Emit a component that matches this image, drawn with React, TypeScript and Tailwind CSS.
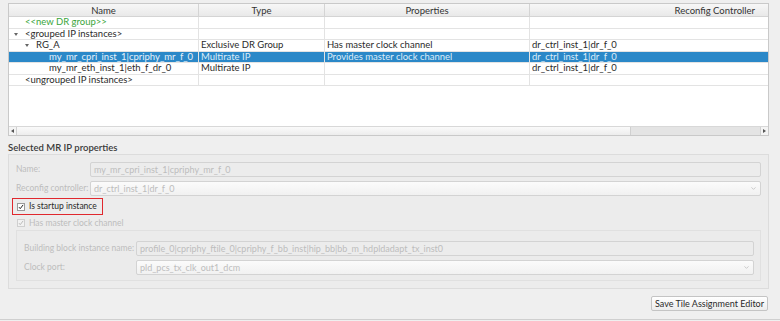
import { ChevronDown } from "lucide-react";

const font = { fontFamily: 'Lato, "Open Sans", sans-serif' };

interface Row {
  name: string;
  indent: number;
  arrow?: boolean;
  type?: string;
  props?: string;
  ctrl?: string;
  green?: boolean;
  selected?: boolean;
  h: string;
}

const rows: Row[] = [
  { name: "<<new DR group>>", indent: 16, green: true, h: "h-[12px]" },
  { name: "<grouped IP instances>", indent: 16, arrow: true, h: "h-[11px]" },
  { name: "RG_A", indent: 27, arrow: true, type: "Exclusive DR Group", props: "Has master clock channel", ctrl: "dr_ctrl_inst_1|dr_f_0", h: "h-[12px]" },
  { name: "my_mr_cpri_inst_1|cpriphy_mr_f_0", indent: 40, type: "Multirate IP", props: "Provides master clock channel", ctrl: "dr_ctrl_inst_1|dr_f_0", selected: true, h: "h-[11px]" },
  { name: "my_mr_eth_inst_1|eth_f_dr_0", indent: 40, type: "Multirate IP", ctrl: "dr_ctrl_inst_1|dr_f_0", h: "h-[12px]" },
  { name: "<ungrouped IP instances>", indent: 16, h: "h-[11px]" },
];

const Check = ({ disabled }: { disabled?: boolean }) => (
  <span
    className={`inline-flex h-[8px] w-[8px] shrink-0 items-center justify-center border ${
      disabled ? "border-[#cfcfcf] bg-[#f2f2f2]" : "border-[#9a9a9a] bg-white"
    }`}
  >
    <svg viewBox="0 0 8 8" className="h-[8px] w-[8px]">
      <path d="M1.3 4.2 L3 6.2 L6.8 1.2" fill="none" stroke={disabled ? "#b8b8b8" : "#222"} strokeWidth="1.3" />
    </svg>
  </span>
);

const Field = ({ value, combo, w }: { value: string; combo?: boolean; w: string }) => (
  <div
    className={`flex h-[15px] ${w} items-center justify-between whitespace-nowrap rounded-[2px] border border-[#d3d3d3] px-[3px] text-[9px] text-[#bdbdbd] ${
      combo ? "bg-gradient-to-b from-[#fbfbfb] to-[#f1f1f1]" : "bg-[#ececec]"
    }`}
  >
    <span>{value}</span>
    {combo && <ChevronDown className="h-[7px] w-[7px] text-[#c4c4c4]" strokeWidth={3} />}
  </div>
);

export default function App() {
  return (
    <div style={font} className="flex h-[321px] w-[780px] flex-col overflow-hidden bg-[#efefef] text-[#333]">
      <div className="flex items-start pt-[3px]">
        <div className="ml-[8px] flex h-[133px] w-[761px] flex-col border border-[#c9c9c9] bg-white">
          <div className="flex h-[13px] border-b border-[#d4d4d4] bg-gradient-to-b from-[#f7f7f7] to-[#e9e9e9] text-[9.5px] leading-[13px]">
            <div className="w-[190px] border-r border-[#d4d4d4] text-center">Name</div>
            <div className="w-[126px] border-r border-[#d4d4d4] text-center">Type</div>
            <div className="w-[205px] border-r border-[#d4d4d4] text-center">Properties</div>
            <div className="flex-1 pr-[13px] text-right">Reconfig Controller</div>
          </div>
          {rows.map((r) => (
            <div
              key={r.name}
              className={`flex ${r.h} items-center whitespace-nowrap border-b border-[#e3e3e3] text-[9.5px] ${
                r.selected ? "bg-[#2b88c8] text-[#dcecf8]" : "text-[#2a2a2a]"
              }`}
            >
              <div className="relative flex h-full w-[190px] items-center border-r border-[#e3e3e3]">
                {r.arrow && (
                  <span
                    className="absolute top-[4px] h-0 w-0 border-x-[2.5px] border-t-[3px] border-x-transparent border-t-[#666]"
                    style={{ left: r.indent - 11 }}
                  />
                )}
                <span
                  className={r.green ? "text-[#3aa53a]" : r.selected ? "text-[#e6f1fa]" : "text-[#2a2a2a]"}
                  style={{ paddingLeft: r.indent }}
                >
                  {r.name}
                </span>
              </div>
              <div className="flex h-full w-[126px] items-center border-r border-[#e3e3e3] pl-[2px]">{r.type}</div>
              <div className="flex h-full w-[205px] items-center border-r border-[#e3e3e3] pl-[2px]">{r.props}</div>
              <div className="flex h-full flex-1 items-center pl-[2px]">{r.ctrl}</div>
            </div>
          ))}
          <div className="flex-1" />
          <div className="flex h-[9px] border-t border-[#d8d8d8] bg-[#e4e4e4]">
            <div className="flex w-[8px] items-center justify-center border-r border-[#d0d0d0] bg-[#f4f4f4]">
              <span className="h-0 w-0 border-y-[2.5px] border-r-[3px] border-y-transparent border-r-[#555]" />
            </div>
            <div className="w-[614px] border-r border-[#d0d0d0] bg-gradient-to-b from-[#fafafa] to-[#ededed]" />
            <div className="flex-1" />
            <div className="flex w-[8px] items-center justify-center border-l border-[#d0d0d0] bg-[#f4f4f4]">
              <span className="h-0 w-0 border-y-[2.5px] border-l-[3px] border-y-transparent border-l-[#555]" />
            </div>
          </div>
        </div>
      </div>

      <div className="ml-[8px] mt-[6px] whitespace-nowrap text-[9.5px] font-semibold leading-[12px] text-[#3a3a3a]">
        Selected MR IP properties
      </div>

      <div className="ml-[8px] flex h-[135px] w-[761px] flex-col whitespace-nowrap border border-[#dcdcdc] bg-[#ececec] text-[8.5px] text-[#bdbdbd]">
        <div className="mt-[7px] flex items-center">
          <span className="w-[81px] shrink-0 pl-[7px]">Name:</span>
          <Field value="my_mr_cpri_inst_1|cpriphy_mr_f_0" w="w-[671px]" />
        </div>
        <div className="mt-[4px] flex items-center">
          <span className="w-[81px] shrink-0 pl-[7px]">Reconfig controller:</span>
          <Field value="dr_ctrl_inst_1|dr_f_0" combo w="w-[671px]" />
        </div>
        <div className="ml-[3px] mt-[2px] flex h-[17px] w-[91px] items-center gap-[4px] border border-[#e0282e] pl-[4px] text-[#2a2a2a]">
          <Check />
          <span>Is startup instance</span>
        </div>
        <div className="ml-[8px] mt-[2px] flex h-[12px] items-center gap-[4px]">
          <Check disabled />
          <span>Has master clock channel</span>
        </div>
        <div className="ml-[7px] mt-[1px] flex h-[51px] w-[745px] flex-col border border-[#e0e0e0] bg-[#ebebeb] pl-[7px]">
          <div className="mt-[10px] flex items-center">
            <span className="w-[112px] shrink-0">Building block instance name:</span>
            <Field value="profile_0|cpriphy_ftile_0|cpriphy_f_bb_inst|hip_bb|bb_m_hdpldadapt_tx_inst0" w="w-[618px]" />
          </div>
          <div className="mt-[4px] flex items-center">
            <span className="w-[112px] shrink-0">Clock port:</span>
            <Field value="pld_pcs_tx_clk_out1_dcm" combo w="w-[618px]" />
          </div>
        </div>
      </div>

      <div className="mt-[7px] flex justify-end pr-[12px]">
        <button className="h-[15px] whitespace-nowrap rounded-[2px] border border-[#c4c4c4] bg-gradient-to-b from-white to-[#ededed] px-[3px] text-[9px] leading-[13px] text-[#2a2a2a]">
          Save Tile Assignment Editor
        </button>
      </div>
      <div className="flex-1" />
      <div className="mb-[1px] h-[1px] bg-[#cfcfcf]" />
    </div>
  );
}
